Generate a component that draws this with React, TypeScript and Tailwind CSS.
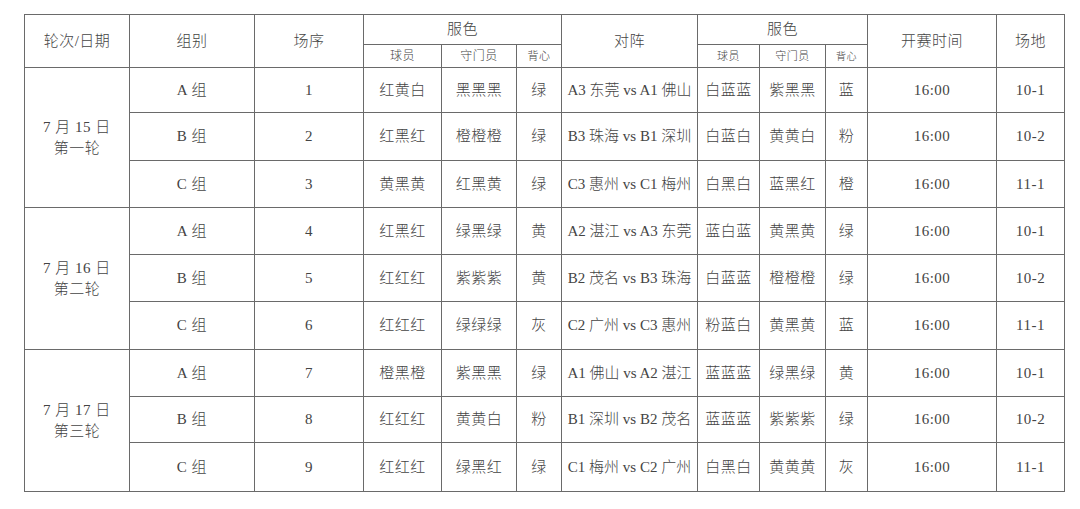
const rounds = [
  {
    date: "7 月 15 日",
    name: "第一轮",
    games: [
      ["A 组", "1", "红黄白", "黑黑黑", "绿", "A3 东莞 vs A1 佛山", "白蓝蓝", "紫黑黑", "蓝", "16:00", "10-1"],
      ["B 组", "2", "红黑红", "橙橙橙", "绿", "B3 珠海 vs B1 深圳", "白蓝白", "黄黄白", "粉", "16:00", "10-2"],
      ["C 组", "3", "黄黑黄", "红黑黄", "绿", "C3 惠州 vs C1 梅州", "白黑白", "蓝黑红", "橙", "16:00", "11-1"],
    ],
  },
  {
    date: "7 月 16 日",
    name: "第二轮",
    games: [
      ["A 组", "4", "红黑红", "绿黑绿", "黄", "A2 湛江 vs A3 东莞", "蓝白蓝", "黄黑黄", "绿", "16:00", "10-1"],
      ["B 组", "5", "红红红", "紫紫紫", "黄", "B2 茂名 vs B3 珠海", "白蓝蓝", "橙橙橙", "绿", "16:00", "10-2"],
      ["C 组", "6", "红红红", "绿绿绿", "灰", "C2 广州 vs C3 惠州", "粉蓝白", "黄黑黄", "蓝", "16:00", "11-1"],
    ],
  },
  {
    date: "7 月 17 日",
    name: "第三轮",
    games: [
      ["A 组", "7", "橙黑橙", "紫黑黑", "绿", "A1 佛山 vs A2 湛江", "蓝蓝蓝", "绿黑绿", "黄", "16:00", "10-1"],
      ["B 组", "8", "红红红", "黄黄白", "粉", "B1 深圳 vs B2 茂名", "蓝蓝蓝", "紫紫紫", "绿", "16:00", "10-2"],
      ["C 组", "9", "红红红", "绿黑红", "绿", "C1 梅州 vs C2 广州", "白黑白", "黄黄黄", "灰", "16:00", "11-1"],
    ],
  },
];

const cell = "bg-white flex items-center justify-center text-center";

export default function App() {
  return (
    <div
      className="w-[1080px] h-[509px] bg-white pt-[14px] pl-[24px] text-[#444]"
      style={{ fontFamily: '"Liberation Serif", "Noto Sans CJK SC", serif' }}
    >
      <div className="inline-grid bg-[#6a6a6a] p-px gap-px grid-cols-[104px_124px_108px_77px_74px_44px_135px_61px_65px_41px_128px_67px] grid-rows-[29px_22px_44px_47px_46px_46px_46px_47px_46px_45px_48px] text-[15px] font-light tracking-[0.5px]">
        <div className={`${cell} row-span-2`}>轮次/日期</div>
        <div className={`${cell} row-span-2`}>组别</div>
        <div className={`${cell} row-span-2`}>场序</div>
        <div className={`${cell} col-span-3`}>服色</div>
        <div className={`${cell} row-span-2`}>对阵</div>
        <div className={`${cell} col-span-3`}>服色</div>
        <div className={`${cell} row-span-2`}>开赛时间</div>
        <div className={`${cell} row-span-2`}>场地</div>
        <div className={`${cell} text-[12px]`}>球员</div>
        <div className={`${cell} text-[12px]`}>守门员</div>
        <div className={`${cell} text-[11px]`}>背心</div>
        <div className={`${cell} text-[11px]`}>球员</div>
        <div className={`${cell} text-[11px]`}>守门员</div>
        <div className={`${cell} text-[10px]`}>背心</div>
        {rounds.map((r) => (
          <>
            <div key={r.date} className={`${cell} row-span-3 flex-col leading-[21px]`}>
              <span>{r.date}</span>
              <span>{r.name}</span>
            </div>
            {r.games.map((g) =>
              g.map((v, i) => (
                <div
                  key={`${g[1]}-${i}`}
                  className={`${cell} whitespace-pre ${i === 5 ? "tracking-normal" : ""}`}
                >
                  {v}
                </div>
              ))
            )}
          </>
        ))}
      </div>
    </div>
  );
}
